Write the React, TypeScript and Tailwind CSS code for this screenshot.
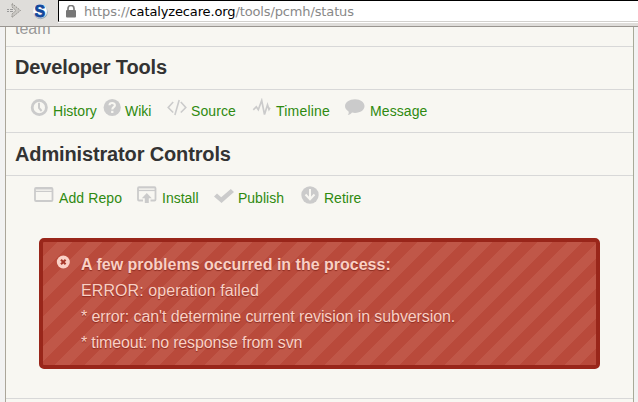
import type { ReactNode } from 'react';

function Item({ label, width, text, children }: { label: string; width: string; text: string; children: ReactNode }) {
  return (
    <a className={`flex shrink-0 items-start text-[14px] leading-[20px] text-[#2f8a10] ${width}`}>
      {children}
      <span className={`whitespace-nowrap ${text}`}>{label}</span>
    </a>
  );
}

function Heading({ pad, children }: { pad: string; children: ReactNode }) {
  return (
    <h2 className={`h-[43px] border-b border-[#d8d8d8] pl-[9px] text-[20px] leading-[41px] font-bold tracking-[-0.14px] text-[#333] ${pad}`}>
      {children}
    </h2>
  );
}

const icon = 'mt-[8px] shrink-0 text-[#cbcbcb]';

export default function App() {
  return (
    <div className="h-[402px] w-[638px] overflow-hidden bg-[#f2f2f2] font-['Liberation_Sans',Arial,sans-serif]">
      <header className="flex h-[27px] border-b border-[#999590] bg-[#dfddda]">
        <div className="flex w-[58px] gap-[11px] pl-[6px]">
          <svg width="16" height="20" viewBox="0 0 16 20" fill="none">
            <path d="M1 9h2v1H1zM1 11h2v1H1zM4 9h3v1H4zM4 11h3v1H4z" fill="#999" />
            <path d="M6 3.5 14.5 10.5 6 17.5V14l4-3.5L6 7z" fill="#c9c7c3" stroke="#8f8d89" strokeDasharray="1.5 1" />
          </svg>
          <svg width="17" height="22" viewBox="0 0 17 22">
            <circle cx="7.5" cy="12" r="7.2" fill="#8e9fae" />
            <circle cx="7" cy="11" r="7.2" fill="#fbfcfd" stroke="#c8d0d8" strokeWidth=".5" />
            <text x="1.500" y="16.500" fontSize="16" fontWeight="700" fill="#12489b" stroke="#12489b" strokeWidth=".8">S</text>
          </svg>
        </div>
        <div className="flex h-[23px] flex-1 flex-col border-b border-white">
          <div className="flex h-[22px] border-t border-b border-l border-t-black border-b-[#d2d0cd] border-l-black bg-white">
            <svg className="mt-[4px] ml-[7px] shrink-0" width="10" height="13" viewBox="0 0 10 13">
              <path d="M2 6V3.5a3 3 0 0 1 6 0V6" fill="none" stroke="#7c7c7c" strokeWidth="1.7" />
              <rect y="5" width="10" height="7.5" rx="1" fill="#777" />
            </svg>
            <div className="ml-[8px] pt-[1px] font-['DejaVu_Sans',sans-serif] text-[13px] leading-[20px] tracking-[-0.13px] whitespace-nowrap text-[#888]">
              https://<span className="text-black">catalyzecare.org</span>/tools/pcmh/status
            </div>
          </div>
        </div>
      </header>

      <main className="ml-[5px] h-[375px] w-[629px] border-x border-l-[#aba69a] border-r-[#a8aa98] bg-[#f8f7f2]">
        <div className="h-[20px] overflow-hidden border-b border-[#d8d8d8] pl-[9px]">
          <p className="-mt-[7px] text-[16px] leading-[18px] text-[#999]">team</p>
        </div>
        <Heading pad="pt-0">Developer Tools</Heading>
        <nav className="flex h-[43px] border-b border-[#d8d8d8] pl-[24px]">
          <Item label="History" text="pt-[11px] pl-[5px] tracking-[0.05px]" width="w-[73px]">
            <svg className={icon} width="18" height="19" viewBox="0 0 18 19" fill="none" stroke="currentColor">
              <circle cx="9.3" cy="9.5" r="7.1" strokeWidth="2.8" />
              <path d="M9 4.8V10l2.6 3" strokeWidth="2" />
            </svg>
          </Item>
          <Item label="Wiki" text="pt-[11px] pl-[4px]" width="w-[64px]">
            <svg className={icon} width="18" height="19" viewBox="0 0 18 19">
              <circle cx="9.2" cy="9.5" r="8.6" fill="currentColor" />
              <path d="M6.5 7.3c0-3 5.4-3 5.4-.1 0 2-2.6 2-2.6 4.2" fill="none" stroke="#f8f7f2" strokeWidth="2.1" />
              <path d="M8.1 12.8h2.3V15H8.1z" fill="#f8f7f2" />
            </svg>
          </Item>
          <Item label="Source" text="pt-[11px] pl-[4px] tracking-[0.1px]" width="w-[85px]">
            <svg className={icon} width="20" height="19" viewBox="0 0 20 19" fill="none" stroke="currentColor" strokeWidth="1.6">
              <path d="M6.2 4 1.2 9.5l5 5M13.8 4l5 5.5-5 5M12.2 2 7.9 17" />
            </svg>
          </Item>
          <Item label="Timeline" text="pt-[11px] pl-[5px] tracking-[0.2px]" width="w-[92px]">
            <svg className={icon} width="19" height="19" viewBox="0 0 19 19" fill="none" stroke="currentColor" strokeWidth="1.7">
              <path d="m1.300 11.800 3-3 2 2.900L9.700 2.500l2.800 14L15.500 6.800l1.500 4.700 1-1.700" />
            </svg>
          </Item>
          <Item label="Message" text="pt-[11px] pl-[5px] tracking-[0.1px]" width="w-[90px]">
            <svg className={icon} width="21" height="19" viewBox="0 0 21 19" fill="currentColor">
              <path d="M11 1.2c5.6 0 9.5 3 9.5 6.900S16.600 15 11 15c-1 0-2-.1-3-.4-1.100 1.500-2.600 2.400-4.200 2.500.8-1.100 1.100-2.400.8-3.700C2.300 12.200 1 10.400 1 8.100c0-3.900 4.400-6.900 10-6.900Z" />
            </svg>
          </Item>
        </nav>
        <Heading pad="pt-[1px]">Administrator Controls</Heading>
        <nav className="flex h-[62px] pl-[28px]">
          <Item label="Add Repo" text="pt-[12px] pl-[5px] tracking-[0.1px]" width="w-[103px]">
            <svg className={icon} width="20" height="19" viewBox="0 0 20 19" fill="none" stroke="currentColor">
              <rect x="1" y="4" width="17.5" height="13" rx="1" strokeWidth="1.8" />
              <path d="M1 7.4h17.5" strokeWidth="1.2" />
              <path d="M2 5.500h16" strokeWidth="1" strokeOpacity=".5" />
            </svg>
          </Item>
          <Item label="Install" text="pt-[12px] pl-[5px]" width="w-[77px]">
            <svg className={icon} width="20" height="19" viewBox="0 0 20 19" fill="none" stroke="currentColor">
              <path d="M6 16.500H2q-1 0-1-1V4.200q0-1 1-1h15.500q1 0 1 1v11.300q0 1-1 1h-4" strokeWidth="1.8" />
              <path d="M1 6.500h17.500" strokeWidth="1.2" />
              <path d="M2 4.700h16" strokeWidth="1" strokeOpacity=".5" />
              <path d="m9.800 9 5 5.200h-3V19h-4v-4.800h-3Z" fill="currentColor" stroke="none" />
            </svg>
          </Item>
          <Item label="Publish" text="pt-[12px] pl-[4px]" width="w-[87px]">
            <svg className={icon} width="20" height="20" viewBox="0 0 20 20" fill="currentColor">
              <path d="m0 12.500 3-3 4.200 3.800L16.800 5l3.200 3L7.500 19Z" />
            </svg>
          </Item>
          <Item label="Retire" text="pt-[12px] pl-[5px]" width="w-[70px]">
            <svg className={icon} width="18" height="20" viewBox="0 0 18 20">
              <circle cx="9" cy="11" r="8.7" fill="currentColor" />
              <path d="M9 5v9.500M4.500 10.500 9 15.200l4.500-4.700" fill="none" stroke="#f8f7f2" strokeWidth="2" />
            </svg>
          </Item>
        </nav>
        <div className="h-[161px] border-b border-[#d8d8d8] pl-[33px]">
          <section className="flex h-[131px] w-[561px] rounded-[5px] border-4 border-[#99261a] bg-[#b94a3b] bg-[linear-gradient(135deg,transparent_25%,#c05748_25%,#c05748_50%,transparent_50%,transparent_75%,#c05748_75%)] bg-[length:30px_30px] pt-[10px] pl-[13px] text-[16px] leading-[26px] whitespace-nowrap text-[#fad0c5] [text-shadow:0_1px_1px_#8c2c20]">
            <svg className="mt-[3px] mr-[10px] shrink-0" width="15" height="15" viewBox="0 0 15 15">
              <circle cx="7.3" cy="7" r="6.5" fill="#fbd1c6" />
              <path d="m5 4.700 4.600 4.600M9.600 4.700 5 9.300" stroke="#a83a2c" strokeWidth="2" />
            </svg>
            <div>
              <h3 className="font-bold">A few problems occurred in the process:</h3>
              <p className="tracking-[0.08px]">ERROR: operation failed</p>
              <p className="tracking-[-0.09px]">* error: can't determine current revision in subversion.</p>
              <p className="tracking-[-0.15px]">* timeout: no response from svn</p>
            </div>
          </section>
        </div>
      </main>
    </div>
  );
}
